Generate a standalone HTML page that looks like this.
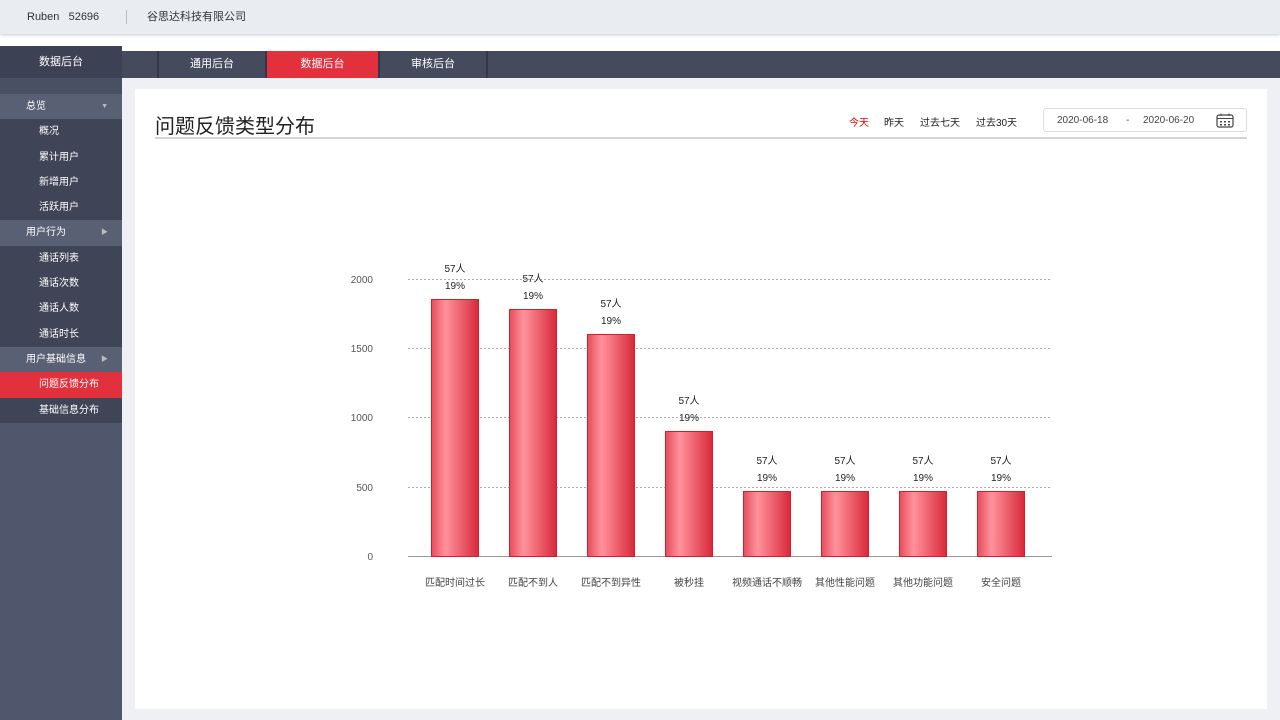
<!DOCTYPE html>
<html><head><meta charset="utf-8"><style>
*{margin:0;padding:0;box-sizing:border-box}
body{width:1280px;height:720px;overflow:hidden;background:#fff;font-family:"Liberation Sans","Noto Sans CJK SC",sans-serif;position:relative}
.top{position:absolute;left:0;top:0;width:1280px;height:34px;background:#e9ecf1;box-shadow:0 1px 3px #c4c9d4;font-size:11px;color:#333}
.top span{position:absolute;top:10px;line-height:14px}
.side{position:absolute;left:0;top:46px;width:122px;height:674px;background:#50566b}
.shead{height:32px;background:#3c4153;color:#fff;font-size:11px;text-align:center;line-height:32px}
.gap{height:16px;background:#4a5063}
.it{height:25.3px;line-height:25px;font-size:10px;color:#fff;padding-left:39px;background:#3f4457}
.gr{background:#5a6074;padding-left:26px;position:relative}
.gr i{position:absolute;right:14px;top:0;font-style:normal;font-size:7px;color:#bbb}
.act{background:#e2303d}
.tabs{position:absolute;left:122px;top:51px;width:1158px;height:27px;background:#454a5d}
.tab{position:absolute;top:0;height:27px;line-height:27px;color:#fff;font-size:11px;text-align:center;border-left:2px solid #33374a}
.main{position:absolute;left:122px;top:78px;width:1158px;height:642px;background:#eef0f3}
.card{position:absolute;left:135px;top:89px;width:1132px;height:620px;background:#fff}
.abs{position:absolute}
</style></head><body>
<div class="top"><span style="left:27px">Ruben&nbsp;&nbsp;&nbsp;52696</span><span style="left:126px;top:10px;width:1px;height:14px;background:#bbb"></span><span style="left:147px">谷思达科技有限公司</span></div>
<div class="tabs">
<div class="tab" style="left:35px;width:108px">通用后台</div>
<div class="tab" style="left:143px;width:113px;background:#e2303d">数据后台</div>
<div class="tab" style="left:256px;width:108px">审核后台</div>
<div class="tab" style="left:364px;width:10px"></div>
</div>
<div class="side">
<div class="shead">数据后台</div><div class="gap"></div>
<div class="it gr">总览<i>▼</i></div>
<div class="it">概况</div><div class="it">累计用户</div><div class="it">新增用户</div><div class="it">活跃用户</div>
<div class="it gr">用户行为<i>▶</i></div>
<div class="it">通话列表</div><div class="it">通话次数</div><div class="it">通话人数</div><div class="it">通话时长</div>
<div class="it gr">用户基础信息<i>▶</i></div>
<div class="it act">问题反馈分布</div><div class="it">基础信息分布</div>
</div>
<div class="main"></div>
<div class="card"></div>
<div class="abs" style="left:155px;top:110px;font-size:20px;color:#222">问题反馈类型分布</div>
<div class="abs" style="left:155px;top:137px;width:1092px;height:2px;background:#d4d4d4"></div>
<div class="abs" style="left:849px;top:114px;font-size:10px;color:#e00">今天</div>
<div class="abs" style="left:884px;top:114px;font-size:10px;color:#222">昨天</div>
<div class="abs" style="left:920px;top:114px;font-size:10px;color:#222">过去七天</div>
<div class="abs" style="left:976px;top:114px;font-size:10px;color:#222">过去30天</div>
<div class="abs" style="left:1043px;top:108px;width:204px;height:24px;border:1px solid #ddd;border-radius:3px;font-size:10px;color:#444;line-height:24px"><span style="position:absolute;left:13px">2020-06-18</span><span style="position:absolute;left:82px">-</span><span style="position:absolute;left:99px">2020-06-20</span>
<svg style="position:absolute;left:172px;top:4px" width="18" height="15" viewBox="0 0 18 15"><rect x="1" y="2" width="16" height="12" rx="2" fill="none" stroke="#444" stroke-width="1.2"/><line x1="1" y1="5.5" x2="17" y2="5.5" stroke="#444"/><line x1="5" y1="0.5" x2="5" y2="3" stroke="#444"/><line x1="13" y1="0.5" x2="13" y2="3" stroke="#444"/><g fill="#444"><rect x="4" y="8" width="2" height="1.5"/><rect x="8" y="8" width="2" height="1.5"/><rect x="12" y="8" width="2" height="1.5"/><rect x="4" y="11" width="2" height="1.5"/><rect x="8" y="11" width="2" height="1.5"/><rect x="12" y="11" width="2" height="1.5"/></g></svg></div>
<svg class="abs" style="left:0;top:0" width="1280" height="720">
<defs><linearGradient id="g" x1="0" x2="1"><stop offset="0" stop-color="#e54c5b"/><stop offset=".3" stop-color="#ff929c"/><stop offset="1" stop-color="#d8293a"/></linearGradient></defs>
<g stroke="#aaa" stroke-dasharray="2,2" stroke-width="1"><line x1="408" y1="279.5" x2="1052" y2="279.5"/><line x1="408" y1="348.5" x2="1052" y2="348.5"/><line x1="408" y1="417.5" x2="1052" y2="417.5"/><line x1="408" y1="487.5" x2="1052" y2="487.5"/></g>
<line x1="408" y1="556.5" x2="1052" y2="556.5" stroke="#999"/>
<g font-size="10" fill="#555" text-anchor="end" font-family="Liberation Sans"><text x="373" y="283">2000</text><text x="373" y="352">1500</text><text x="373" y="421">1000</text><text x="373" y="491">500</text><text x="373" y="560">0</text></g>
<g fill="url(#g)" stroke="#d0202e" stroke-width="1">
<rect x="431.5" y="299.5" width="47" height="257"/><rect x="509.5" y="309.5" width="47" height="247"/><rect x="587.5" y="334.5" width="47" height="222"/><rect x="665.5" y="431.5" width="47" height="125"/><rect x="743.5" y="491.5" width="47" height="65"/><rect x="821.5" y="491.5" width="47" height="65"/><rect x="899.5" y="491.5" width="47" height="65"/><rect x="977.5" y="491.5" width="47" height="65"/></g>
<g font-size="10" fill="#222" text-anchor="middle" font-family="Liberation Sans,Noto Sans CJK SC">
<text x="455" y="272">57人</text><text x="455" y="289">19%</text>
<text x="533" y="282">57人</text><text x="533" y="299">19%</text>
<text x="611" y="307">57人</text><text x="611" y="324">19%</text>
<text x="689" y="404">57人</text><text x="689" y="421">19%</text>
<text x="767" y="464">57人</text><text x="767" y="481">19%</text>
<text x="845" y="464">57人</text><text x="845" y="481">19%</text>
<text x="923" y="464">57人</text><text x="923" y="481">19%</text>
<text x="1001" y="464">57人</text><text x="1001" y="481">19%</text></g>
<g font-size="10" fill="#444" text-anchor="middle" font-family="Liberation Sans,Noto Sans CJK SC">
<text x="455" y="586">匹配时间过长</text><text x="533" y="586">匹配不到人</text><text x="611" y="586">匹配不到异性</text><text x="689" y="586">被秒挂</text><text x="767" y="586">视频通话不顺畅</text><text x="845" y="586">其他性能问题</text><text x="923" y="586">其他功能问题</text><text x="1001" y="586">安全问题</text></g>
</svg>
</body></html>
